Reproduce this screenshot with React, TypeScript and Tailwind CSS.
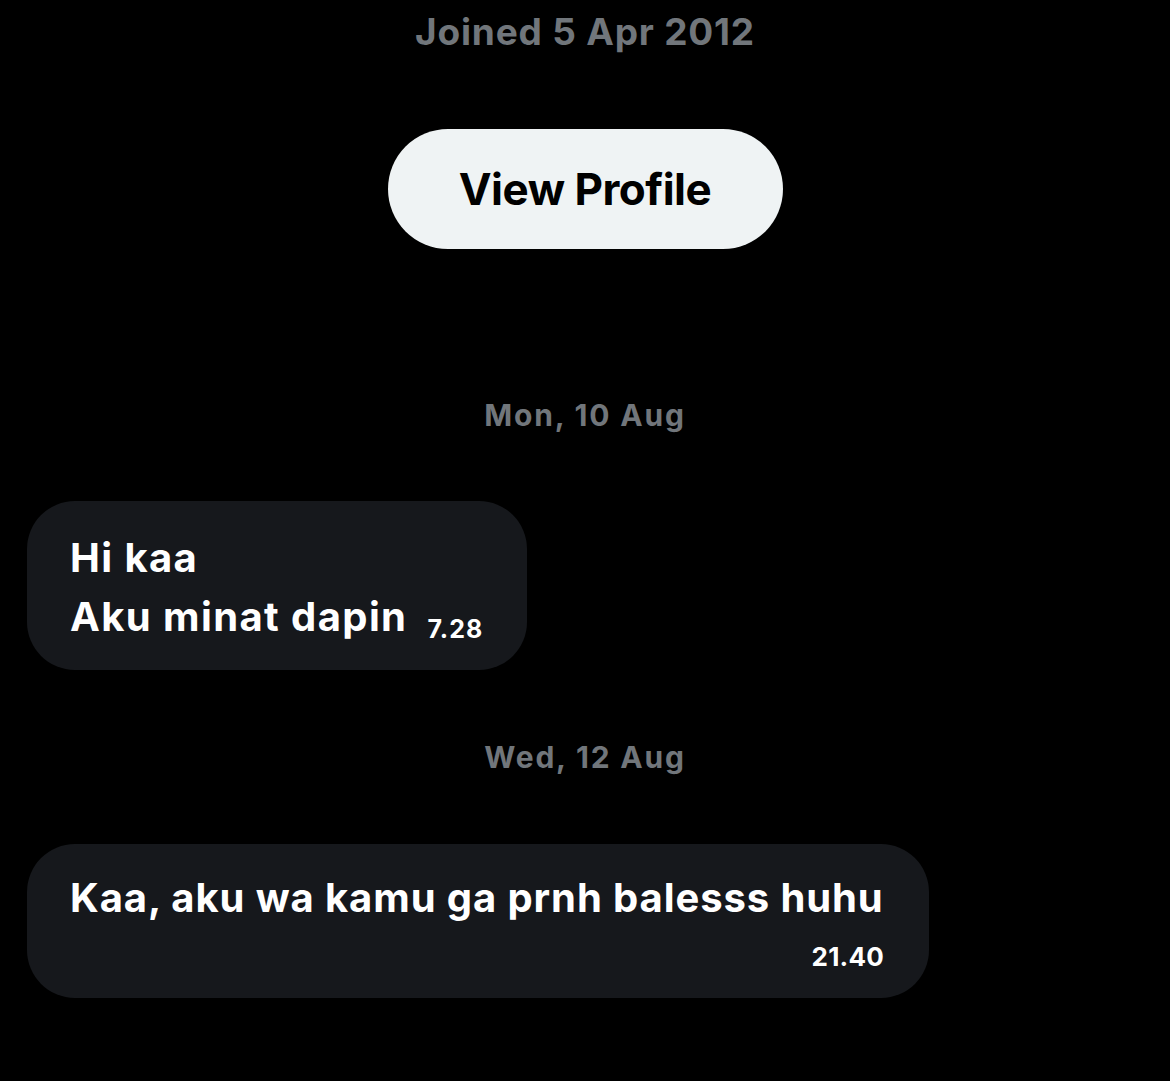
export default function App() {
  return (
    <div
      className="w-[1170px] h-[1081px] bg-black flex flex-col overflow-hidden"
      style={{ fontFamily: 'Inter, "Noto Sans", sans-serif' }}
    >
      <div className="pt-[8px] text-center text-[37px] leading-[48px] font-bold text-[#71767b] tracking-[0.8px]">
        Joined 5 Apr 2012
      </div>
      <div className="flex justify-center mt-[73px]">
        <button className="w-[395px] h-[120px] rounded-full bg-[#eff3f4] text-black text-[44px] leading-[52px] font-bold tracking-[-0.5px]">
          View Profile
        </button>
      </div>
      <div className="mt-[146px] text-center text-[30px] leading-[40px] font-bold text-[#71767b] tracking-[1.8px]">
        Mon, 10 Aug
      </div>
      <div className="mt-[66px] ml-[27px] w-[500px] h-[169px] rounded-[48px] bg-[#16181c] px-[43px] pt-[27px] text-white">
        <div className="text-[40px] leading-[59px] font-bold tracking-[1.4px]">Hi kaa</div>
        <div className="flex items-end">
          <span className="text-[40px] leading-[59px] font-bold tracking-[1.4px]">Aku minat dapin</span>
          <span className="ml-[20px] text-[25px] leading-[34px] font-bold tracking-[1px]">7.28</span>
        </div>
      </div>
      <div className="mt-[67px] text-center text-[30px] leading-[40px] font-bold text-[#71767b] tracking-[1.8px]">
        Wed, 12 Aug
      </div>
      <div className="mt-[67px] ml-[27px] w-[902px] h-[154px] rounded-[48px] bg-[#16181c] pl-[43px] pr-[45px] pt-[26px] text-white">
        <div className="text-[40px] leading-[56px] font-bold tracking-[0.9px] whitespace-nowrap">
          Kaa, aku wa kamu ga prnh balesss huhu
        </div>
        <div className="mt-[15px] text-right text-[26px] leading-[32px] font-bold tracking-[0.2px]">21.40</div>
      </div>
    </div>
  );
}
